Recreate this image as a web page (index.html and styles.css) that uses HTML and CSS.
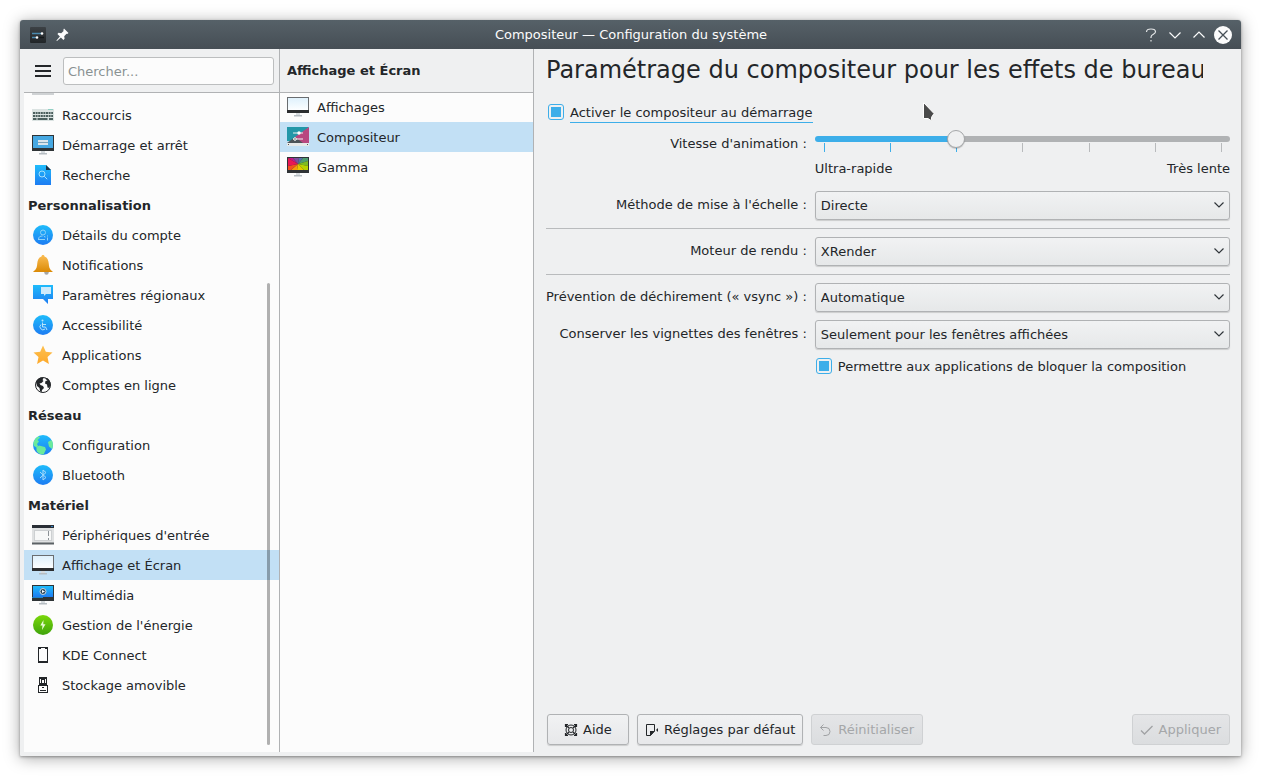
FILE: index.html
```
<!DOCTYPE html>
<html lang="fr">
<head>
    <meta charset="UTF-8">
    <meta name="viewport" content="width=device-width, initial-scale=1.0">
    <title>Compositeur — Configuration du système</title>
    <link rel="stylesheet" href="styles.css">
</head>
<body>
    <!-- dégradés et pictogrammes partagés -->
    <svg class="defs" width="0" height="0" aria-hidden="true">
        <defs>
            <linearGradient id="blue" x1="0" y1="0" x2="0" y2="1"><stop offset="0" stop-color="#1fbcfb"/><stop offset="1" stop-color="#1d7cf2"/></linearGradient>
            <linearGradient id="green" x1="0" y1="0" x2="0" y2="1"><stop offset="0" stop-color="#7ad80a"/><stop offset="1" stop-color="#3fa30c"/></linearGradient>
            <linearGradient id="gold" x1="0" y1="0" x2="0" y2="1"><stop offset="0" stop-color="#fbbd53"/><stop offset="1" stop-color="#db8a06"/></linearGradient>
            <linearGradient id="star" x1="0" y1="0" x2="0" y2="1"><stop offset="0" stop-color="#fdc04f"/><stop offset="1" stop-color="#fda92b"/></linearGradient>
            <linearGradient id="sky" x1="0" y1="0" x2="0" y2="1"><stop offset="0" stop-color="#dff1fc"/><stop offset="1" stop-color="#fcfeff"/></linearGradient>
            <linearGradient id="dark" x1="0" y1="0" x2="0" y2="1"><stop offset="0" stop-color="#3c4145"/><stop offset="1" stop-color="#212528"/></linearGradient>
            <symbol id="monitor" viewBox="0 0 22 22">
                <path d="M9 17h4v2h-4z" fill="#d5dade"/>
                <path d="M7 19h8v1.500h-8z" fill="#b6bdc2"/>
                <path d="M0 1h22v16h-22z" fill="#6a6d70"/>
                <path d="M0 14h22v3h-22z" fill="#2c2e30"/>
                <path d="M1 2h20v12h-20z" fill="url(#sky)"/>
            </symbol>
        </defs>
    </svg>

    <div class="window">
        <!-- Barre de titre -->
        <header class="titlebar">
            <div class="title-left">
                <svg width="16" height="16" viewBox="0 0 16 16">
                    <rect width="16" height="16" rx="1" fill="url(#dark)"/>
                    <path d="M2 6.500h9" stroke="#4a89ae" stroke-width="1.500"/>
                    <path d="M6 10.500h8" stroke="#15191b" stroke-width="1.500"/>
                    <path d="M2 10.500h4" stroke="#4a89ae" stroke-width="1.500"/>
                    <circle cx="12" cy="6.500" r="1.300" fill="#fff"/>
                    <circle cx="7" cy="10.500" r="1.300" fill="#fff"/>
                </svg>
                <svg width="14" height="14" viewBox="0 0 14 14" fill="#fcfcfc">
                    <path d="M9 .5l4.500 4.500-1.300 1-.7-.2-2.300 2.400.4 2.600-1.200 1.200-2.500-2.500-3.900 3.500-.6-.6 3.500-3.900L2.400 6l1.200-1.200 2.600.4 2.400-2.300-.3-.9z"/>
                </svg>
            </div>
            <span class="title-text">Compositeur — Configuration du système</span>
            <div class="title-buttons">
                <button type="button" aria-label="Aide contextuelle">
                    <svg width="18" height="18" viewBox="0 0 18 18" fill="none" stroke="#e4e7e8" stroke-width="1.200"><path d="M4.500 6c0-2 1.500-3 4.500-3s4.500 1 4.500 2.800c0 2.600-4.500 2.200-4.500 5.200v1M9 14v1.500"/></svg>
                </button>
                <button type="button" aria-label="Réduire">
                    <svg width="18" height="18" viewBox="0 0 18 18" fill="none" stroke="#fcfcfc" stroke-width="1.200"><path d="M3.500 6.500l5.500 5.500 5.500-5.500"/></svg>
                </button>
                <button type="button" aria-label="Agrandir">
                    <svg width="18" height="18" viewBox="0 0 18 18" fill="none" stroke="#fcfcfc" stroke-width="1.200"><path d="M3.500 11.500l5.500-5.500 5.500 5.500"/></svg>
                </button>
                <button type="button" aria-label="Fermer">
                    <svg width="18" height="18" viewBox="0 0 18 18"><circle cx="9" cy="9" r="9" fill="#fcfcfc"/><path d="M4.500 4.500l9 9M13.500 4.500l-9 9" stroke="#475057" stroke-width="1.300"/></svg>
                </button>
            </div>
        </header>

        <div class="content">
            <!-- Catégories -->
            <nav class="sidebar">
                <div class="pane-header search-header">
                    <button type="button" class="menu-button" aria-label="Menu">
                        <svg width="16" height="12" viewBox="0 0 16 12" fill="#232629"><path d="M0 0h16v2h-16zM0 5h16v2h-16zM0 10h16v2h-16z"/></svg>
                    </button>
                    <input type="text" class="search" placeholder="Chercher..." aria-label="Chercher">
                </div>
                <div class="list">
                    <div class="cut-row"><svg width="22" height="2" viewBox="0 0 22 2"><path d="M0 0h22v2h-22z" fill="#cfd2d4"/></svg></div>
                    <a href="#" class="item">
                        <svg viewBox="0 0 22 22">
                            <path d="M0 5h22v12h-22z" fill="#dbe3e2"/><path d="M16 5.500h5" stroke="#8fd0c4"/>
                            <path d="M1 9h20M1 12h20" stroke="#4c5f5e" stroke-width="2" stroke-dasharray="2 .6"/>
                            <path d="M1 15h3.500M5.500 15h10M17 15h4" stroke="#4c5f5e" stroke-width="2"/>
                        </svg>
                        Raccourcis
                    </a>
                    <a href="#" class="item">
                        <svg viewBox="0 0 22 22">
                            <use href="#monitor" width="22" height="22"/>
                            <path d="M0 1h22v16h-22z" fill="#2f3436"/><path d="M1 2h20v12h-20z" fill="#46a8e2"/>
                            <path d="M6 6h10v2h-10zM6 9h10v2h-10z" fill="#dbe6ec"/><path d="M6 8h10v1h-10z" fill="#7fa3b8"/>
                        </svg>
                        Démarrage et arrêt
                    </a>
                    <a href="#" class="item">
                        <svg viewBox="0 0 22 22">
                            <path d="M3 1h11l5 5v15h-16z" fill="url(#blue)"/><path d="M14 1l5 5h-5z" fill="#1d3447"/>
                            <circle cx="10" cy="10" r="3" fill="none" stroke="#a6e0fb"/><path d="M12.200 12.200l3 3" stroke="#a6e0fb"/>
                        </svg>
                        Recherche
                    </a>
                    <h2>Personnalisation</h2>
                    <a href="#" class="item">
                        <svg viewBox="0 0 22 22" fill="none">
                            <circle cx="11" cy="11" r="10" fill="url(#blue)"/>
                            <circle cx="11" cy="8.500" r="2.500" stroke="#8fd3f8"/><path d="M6.500 15.500c0-3 2-3.500 4-3.500M6 15.500h7M12 12.500l1.500.5" stroke="#8fd3f8"/><path d="M15.500 11.500v1M15.500 13.500v3" stroke="#8fd3f8"/>
                        </svg>
                        Détails du compte
                    </a>
                    <a href="#" class="item">
                        <svg viewBox="0 0 22 22">
                            <circle cx="14.500" cy="18.500" r="2.200" fill="#a4a6a7"/>
                            <path d="M11 1c1 0 1.500.6 1.500 1.500 3 1 4 4 4.300 7.500.3 4 1.200 5.500 4.200 8h-20c3-2.500 3.900-4 4.200-8 .3-3.500 1.300-6.500 4.300-7.500 0-.9.500-1.500 1.500-1.500z" fill="url(#gold)"/>
                        </svg>
                        Notifications
                    </a>
                    <a href="#" class="item">
                        <svg viewBox="0 0 22 22">
                            <path d="M1 1h20v14h-5v5l-5-5h-10z" fill="url(#blue)"/><path d="M9 3h10v7h-5l-2 2v-2h-3z" fill="#cdeafb"/>
                        </svg>
                        Paramètres régionaux
                    </a>
                    <a href="#" class="item">
                        <svg viewBox="0 0 22 22" fill="none">
                            <circle cx="11" cy="11" r="10" fill="url(#blue)"/>
                            <circle cx="10.500" cy="6.500" r="1" fill="#b7e4fb"/><path d="M10.500 8.500v4.500h3l1.500 3M11 10.500h3M9 10.500a3 3 0 1 0 4 4.500" stroke="#b7e4fb"/>
                        </svg>
                        Accessibilité
                    </a>
                    <a href="#" class="item">
                        <svg viewBox="0 0 22 22"><path d="M11 1.500l2.800 6.300 6.700.7-5 4.600 1.400 6.900-5.900-3.500-5.900 3.500 1.400-6.900-5-4.600 6.700-.7z" fill="url(#star)"/></svg>
                        Applications
                    </a>
                    <a href="#" class="item">
                        <svg viewBox="0 0 22 22">
                            <circle cx="11" cy="11" r="7.500" fill="none" stroke="#232629"/>
                            <path d="M4 8c1-3 3.500-4.500 6-4.500l1.500 1-1 1.500 1 1-2 2-2 .5 1 1.500 2.500 1 1 2-2 2-.5 2.500-1.500-1.500-.5-3-2.500-2zM13 4.500l2-.5c2 1 3.500 3.500 3.500 6l-1 4-2-.5-.5-3-2-1 .5-2.500 2-.5z" fill="#232629"/>
                        </svg>
                        Comptes en ligne
                    </a>
                    <h2>Réseau</h2>
                    <a href="#" class="item">
                        <svg viewBox="0 0 22 22">
                            <circle cx="11" cy="11" r="10" fill="url(#blue)"/>
                            <path d="M1.500 8.500c.8-2.500 2.500-5 5-6.200l1.500 1.200-2.500 2.500 1.500 1.500-2 2.500 1 2-1.500 1.500-3-2zM4.500 13.500l2.500-2 6 1.500 1 2.500-2.500 5.200c-3 0-6.500-2-7-4.200zM16 8l3.500-2c1.700 2.500 2 6 .5 9l-3-2.500z" fill="#6bea9b"/>
                        </svg>
                        Configuration
                    </a>
                    <a href="#" class="item">
                        <svg viewBox="0 0 22 22" fill="none">
                            <circle cx="11" cy="11" r="10" fill="url(#blue)"/>
                            <path d="M8 8l6 5.500-3 2.500v-10l3 2.500-6 5.500" stroke="#a9dcfa"/>
                        </svg>
                        Bluetooth
                    </a>
                    <h2>Matériel</h2>
                    <a href="#" class="item">
                        <svg viewBox="0 0 22 22">
                            <path d="M0 1h22v19h-22z" fill="#dfe1e2"/><path d="M0 1h22v3h-22z" fill="#2a2f36"/><path d="M19 2h2v1h-2z" fill="#2f7fc0"/>
                            <path d="M0 18.500h22v2h-22z" fill="#5b6165"/><rect x="2.500" y="6.500" width="17" height="10" fill="#f7f8f8" stroke="#cdd0d2"/>
                            <path d="M16.500 7v5M16.500 14v2" stroke="#8b9195"/>
                        </svg>
                        Périphériques d'entrée
                    </a>
                    <a href="#" class="item selected">
                        <svg viewBox="0 0 22 22"><use href="#monitor" width="22" height="22"/></svg>
                        Affichage et Écran
                    </a>
                    <a href="#" class="item">
                        <svg viewBox="0 0 22 22">
                            <use href="#monitor" width="22" height="22"/>
                            <path d="M0 1h22v16h-22z" fill="#2f3436"/><path d="M1 2h20v11h-20z" fill="url(#blue)"/><path d="M0 13.500h11" stroke="#2383c4"/>
                            <circle cx="11" cy="7.500" r="3" fill="#26435b" stroke="#c9d6de"/><path d="M10 6l3 1.500-3 1.500z" fill="#fff"/>
                        </svg>
                        Multimédia
                    </a>
                    <a href="#" class="item">
                        <svg viewBox="0 0 22 22"><circle cx="11" cy="11" r="10" fill="url(#green)"/><path d="M11.500 6l-3.200 5.500h2.200l-.5 4.500 3.500-5.700h-2.200z" fill="#e9fbd8"/></svg>
                        Gestion de l'énergie
                    </a>
                    <a href="#" class="item">
                        <svg viewBox="0 0 22 22"><path d="M6 3h10v16h-10zM7 5v12h8v-12zM9 4v1h4v-1z" fill="#232629" fill-rule="evenodd"/></svg>
                        KDE Connect
                    </a>
                    <a href="#" class="item">
                        <svg viewBox="0 0 22 22"><path d="M7 3h8v8h1v8h-10v-8h1zM8 5v4h1v-4zM10 6v3h2v-3zM13 5v4h1v-4zM7 12v6h8v-6z" fill="#232629" fill-rule="evenodd"/><path d="M10 13.500h2M8 16.500h6" stroke="#232629"/></svg>
                        Stockage amovible
                    </a>
                    <div class="scrollbar"></div>
                </div>
            </nav>

            <!-- Modules de la catégorie -->
            <nav class="modules">
                <div class="pane-header"><h2>Affichage et Écran</h2></div>
                <div class="list">
                    <a href="#" class="item">
                        <svg viewBox="0 0 22 22"><use href="#monitor" width="22" height="22"/></svg>
                        Affichages
                    </a>
                    <a href="#" class="item selected">
                        <svg viewBox="0 0 22 22">
                            <path d="M0 1h22l-14 14h-8z" fill="#2397a8"/><path d="M22 1v16h-8l-6-6z" fill="#b8477f"/>
                            <path d="M0 17l8-6 8 6z" fill="#4d5458"/><path d="M0 17h22v3h-22z" fill="#e6e8e8"/><path d="M1 18.500h1M20 18.500h1" stroke="#555"/>
                            <path d="M6 7h10M6 13h10" stroke="#f1f4f4"/><circle cx="12" cy="7" r="1.700" fill="#fff"/><circle cx="8" cy="13" r="1.300" fill="#4d5458" stroke="#fff"/>
                        </svg>
                        Compositeur
                    </a>
                    <a href="#" class="item">
                        <svg viewBox="0 0 22 22">
                            <use href="#monitor" width="22" height="22"/>
                            <path d="M0 1h22v16h-22z" fill="#303336"/>
                            <path d="M11 8l-10-6h5z" fill="#c2188b"/><path d="M11 8l-5-6h6z" fill="#7b4f9c"/><path d="M11 8l1-6h4z" fill="#5a6fae"/><path d="M11 8l5-6h5v3z" fill="#4f9d70"/>
                            <path d="M11 8l10-3v5z" fill="#7ebc22"/><path d="M11 8l10 2v4h-4z" fill="#b8d400"/><path d="M11 8l6 6h-7z" fill="#e8c800"/><path d="M11 8l-1 6h-6z" fill="#f79a0b"/>
                            <path d="M11 8l-7 6h-3v-4z" fill="#f4511e"/><path d="M11 8l-10 2v-8z" fill="#ea1655"/>
                        </svg>
                        Gamma
                    </a>
                </div>
            </nav>

            <!-- Réglages du compositeur -->
            <main class="main">
                <h1>Paramétrage du compositeur pour les effets de bureau</h1>

                <div class="check-row startup">
                    <input type="checkbox" id="startup" checked>
                    <label for="startup" class="focused">Activer le compositeur au démarrage</label>
                </div>

                <form class="form">
                    <label for="speed" class="name">Vitesse d'animation :</label>
                    <div class="slider">
                        <input type="range" id="speed" min="0" max="6" value="2">
                        <div class="ticks">
                            <i class="on"></i><i class="on"></i><i class="on"></i><i></i><i></i><i></i><i></i>
                        </div>
                        <div class="slider-labels"><span>Ultra-rapide</span><span>Très lente</span></div>
                    </div>

                    <label for="scale" class="name">Méthode de mise à l'échelle :</label>
                    <div class="combo">
                        <select id="scale"><option>Directe</option></select>
                        <svg width="12" height="8" viewBox="0 0 12 8"><path d="M1.500 1.500l4.500 4.500 4.500-4.500"/></svg>
                    </div>

                    <hr>

                    <label for="backend" class="name">Moteur de rendu :</label>
                    <div class="combo">
                        <select id="backend"><option>XRender</option></select>
                        <svg width="12" height="8" viewBox="0 0 12 8"><path d="M1.500 1.500l4.500 4.500 4.500-4.500"/></svg>
                    </div>

                    <hr>

                    <label for="vsync" class="name">Prévention de déchirement (« vsync ») :</label>
                    <div class="combo">
                        <select id="vsync"><option>Automatique</option></select>
                        <svg width="12" height="8" viewBox="0 0 12 8"><path d="M1.500 1.500l4.500 4.500 4.500-4.500"/></svg>
                    </div>

                    <label for="thumbs" class="name">Conserver les vignettes des fenêtres :</label>
                    <div class="combo">
                        <select id="thumbs"><option>Seulement pour les fenêtres affichées</option></select>
                        <svg width="12" height="8" viewBox="0 0 12 8"><path d="M1.500 1.500l4.500 4.500 4.500-4.500"/></svg>
                    </div>

                    <div class="check-row block">
                        <input type="checkbox" id="block" checked>
                        <label for="block">Permettre aux applications de bloquer la composition</label>
                    </div>
                </form>

                <div class="buttons">
                    <button type="button" class="btn help">
                        <svg width="14" height="14" viewBox="0 0 14 14" fill="none" stroke="#232629"><circle cx="7" cy="7" r="5"/><circle cx="7" cy="7" r="2.500"/><path d="M1 1.500h3M1.500 1v3M10 1.500h3M12.500 1v3M1 12.500h3M1.500 10v3M10 12.500h3M12.500 10v3M2 2l3 3M12 2l-3 3M2 12l3-3M12 12l-3-3" stroke-width="1.200"/></svg>
                        Aide
                    </button>
                    <button type="button" class="btn">
                        <svg width="14" height="14" viewBox="0 0 14 14"><path d="M1.500 1.500h8v6.500l-4 4.500h-4z" fill="none" stroke="#232629"/><path d="M5 13v-5h5zM13 5v4l-2-2z" fill="#232629"/></svg>
                        Réglages par défaut
                    </button>
                    <button type="button" class="btn" disabled>
                        <svg width="14" height="14" viewBox="0 0 14 14" fill="none" stroke="#a0a2a4"><path d="M4.500 1.500l-3 3 3 3M1.500 4.500h5.500a4 4 0 0 1 0 8h-2.500"/></svg>
                        Réinitialiser
                    </button>
                    <button type="button" class="btn apply" disabled>
                        <svg width="14" height="14" viewBox="0 0 14 14" fill="none" stroke="#a0a2a4" stroke-width="1.300"><path d="M1 7.500l3.500 3.500 8-8"/></svg>
                        Appliquer
                    </button>
                </div>
            </main>
        </div>

        <!-- pointeur de la souris -->
        <svg class="pointer" width="14" height="22" viewBox="0 0 14 22"><path d="M1.500 1.500v16h4.500l3.200 2.200.5-3.700 2.300-3.500z" fill="#4a4a4a" stroke="#fff"/></svg>
    </div>
</body>
</html>
```
FILE: styles.css
```
* {
    box-sizing: border-box;
}
body {
    font-family: "DejaVu Sans", sans-serif;
    font-size: 13px;
    line-height: 18px;
    color: #232629;
    background-color: #fff;
    margin: 0;
    padding: 20px;
}
button, input, select {
    font: inherit;
    color: inherit;
    margin: 0;
}
svg {
    display: block;
    flex: none;
}
.defs {
    position: absolute;
}
h1, h2 {
    margin: 0;
    font-weight: normal;
}
.window {
    position: relative;
    display: flex;
    flex-direction: column;
    min-height: calc(100vh - 40px);
    background-color: #eff0f1;
    border-radius: 3px 3px 1px 1px;
    box-shadow: 0 1px 3px rgba(0, 0, 0, 0.35), 0 2px 16px rgba(0, 0, 0, 0.35);
}

/* barre de titre */
.titlebar {
    display: grid;
    grid-template-columns: 1fr auto 1fr;
    align-items: center;
    height: 29px;
    padding: 0 9px 0 10px;
    color: #fcfcfc;
    background: linear-gradient(#566168, #464e55);
    border-radius: 3px 3px 0 0;
}
.title-left, .title-buttons {
    display: flex;
    align-items: center;
}
.title-left {
    gap: 9px;
}
.title-buttons {
    justify-content: flex-end;
    gap: 6px;
}
.title-buttons button {
    padding: 0;
    border: none;
    background: none;
}

/* colonnes */
.content {
    flex: 1;
    display: flex;
    padding-left: 4px;
}
.sidebar, .modules {
    display: flex;
    flex-direction: column;
    flex: none;
    margin-bottom: 4px;
}
.sidebar {
    width: 255px;
}
.modules {
    width: 255px;
    border-left: 1px solid #b0b2b4;
    border-right: 1px solid #b0b2b4;
}
.pane-header {
    display: flex;
    align-items: center;
    height: 44px;
    padding: 0 7px;
    border-bottom: 1px solid #b0b2b4;
}
.search-header {
    gap: 12px;
    padding: 0 5px 0 11px;
}
.menu-button {
    padding: 0;
    border: none;
    background: none;
}
.search {
    flex: 1;
    min-width: 0;
    height: 28px;
    padding: 1px 4px 0;
    border: 1px solid #bcbebf;
    border-radius: 3px;
    background-color: #fcfcfc;
}
.search::placeholder {
    color: #8a9293;
    opacity: 1;
}
.list {
    position: relative;
    flex: 1;
    background-color: #fcfcfc;
}
.modules .pane-header {
    position: relative;
    z-index: 1;
    margin-bottom: -1px;
}
h2 {
    font-size: 13px;
    font-weight: bold;
}
.list h2 {
    height: 30px;
    line-height: 32px;
    padding-left: 4px;
}
.cut-row {
    height: 7px;
    padding-left: 8px;
}
.item {
    display: flex;
    align-items: flex-start;
    gap: 8px;
    height: 30px;
    line-height: 32px;
    padding-left: 8px;
    color: #232629;
    text-decoration: none;
}
.modules .item {
    padding-left: 7px;
}
.item svg {
    width: 22px;
    height: 22px;
    margin-top: 4px;
}
.item.selected {
    background-color: #c2e0f5;
}
.scrollbar {
    position: absolute;
    top: 190px;
    right: 9px;
    bottom: 7px;
    width: 3px;
    border-radius: 2px;
    background-color: rgba(0, 0, 0, 0.3);
}

/* réglages */
.main {
    flex: 1;
    min-width: 0;
    display: flex;
    flex-direction: column;
    padding: 0 11px 11px 12px;
}
h1 {
    font-size: 24px;
    line-height: 42px;
    margin-right: 27px;
    white-space: nowrap;
    overflow: hidden;
}
.check-row {
    display: flex;
    align-items: flex-start;
    gap: 6px;
    line-height: 19px;
}
.startup {
    margin: 12px 0 7px 2px;
}
.focused {
    border-bottom: 1px solid #3daee9;
}
input[type="checkbox"] {
    appearance: none;
    width: 16px;
    height: 16px;
    margin-top: 1px;
    border: 1px solid #3daee9;
    border-radius: 3px;
}
input[type="checkbox"]:checked {
    padding: 2px;
    background: #3daee9 content-box;
}
.form {
    display: grid;
    grid-template-columns: auto 1fr;
    gap: 8px;
}
.name {
    line-height: 27px;
    text-align: right;
    white-space: nowrap;
}
.slider {
    padding-bottom: 5px;
}
input[type="range"] {
    appearance: none;
    display: block;
    position: relative;
    width: 100%;
    height: 18px;
    background: none;
}
input[type="range"]::-webkit-slider-runnable-track {
    height: 6px;
    border-radius: 3px;
    background: linear-gradient(to right, #3daee9 34%, #b0b2b4 34%);
}
input[type="range"]::-webkit-slider-thumb {
    appearance: none;
    width: 18px;
    height: 18px;
    margin-top: -6px;
    border: 1px solid #a5a7a9;
    border-radius: 50%;
    background-color: #eff0f1;
    box-shadow: 0 1px 1px rgba(0, 0, 0, 0.2);
}
.ticks {
    display: flex;
    justify-content: space-between;
    height: 9px;
    margin: -5px 8px 8px 9px;
}
.ticks i {
    width: 1px;
    background-color: #b8babc;
}
.ticks .on {
    background-color: #3daee9;
}
.slider-labels {
    display: flex;
    justify-content: space-between;
}
.combo {
    position: relative;
}
.combo select {
    appearance: none;
    display: block;
    width: 100%;
    height: 29px;
    padding: 0 24px 0 5px;
    border: 1px solid #b0b2b4;
    border-radius: 3px;
    background: linear-gradient(#f1f2f3, #e6e8e9);
    box-shadow: 0 1px 1px rgba(0, 0, 0, 0.15);
}
.combo svg {
    position: absolute;
    top: 10px;
    right: 5px;
    fill: none;
    stroke: #31363b;
    stroke-width: 1.2;
    pointer-events: none;
}
hr {
    grid-column: 1 / -1;
    width: 100%;
    height: 1px;
    margin: 0;
    border: none;
    background-color: #b9bbbd;
}
.block {
    grid-column: 2;
    padding-left: 1px;
}
.buttons {
    display: flex;
    gap: 8px;
    margin-top: auto;
    padding-left: 1px;
}
.btn {
    display: flex;
    align-items: center;
    justify-content: center;
    gap: 5px;
    height: 31px;
    padding: 0 7px;
    border: 1px solid #b0b2b4;
    border-radius: 3px;
    background: linear-gradient(#f1f2f3, #e7e8ea);
    box-shadow: 0 1px 1px rgba(0, 0, 0, 0.15);
}
.btn:disabled {
    padding: 0 8px 0 7px;
    color: #a5a7a9;
    border-color: #cfd1d3;
    background: linear-gradient(#e4e5e7, #dbdddf);
    box-shadow: none;
}
.help {
    min-width: 82px;
}
.apply {
    margin-left: auto;
}
.pointer {
    position: absolute;
    top: 81px;
    left: 902px;
}
```
